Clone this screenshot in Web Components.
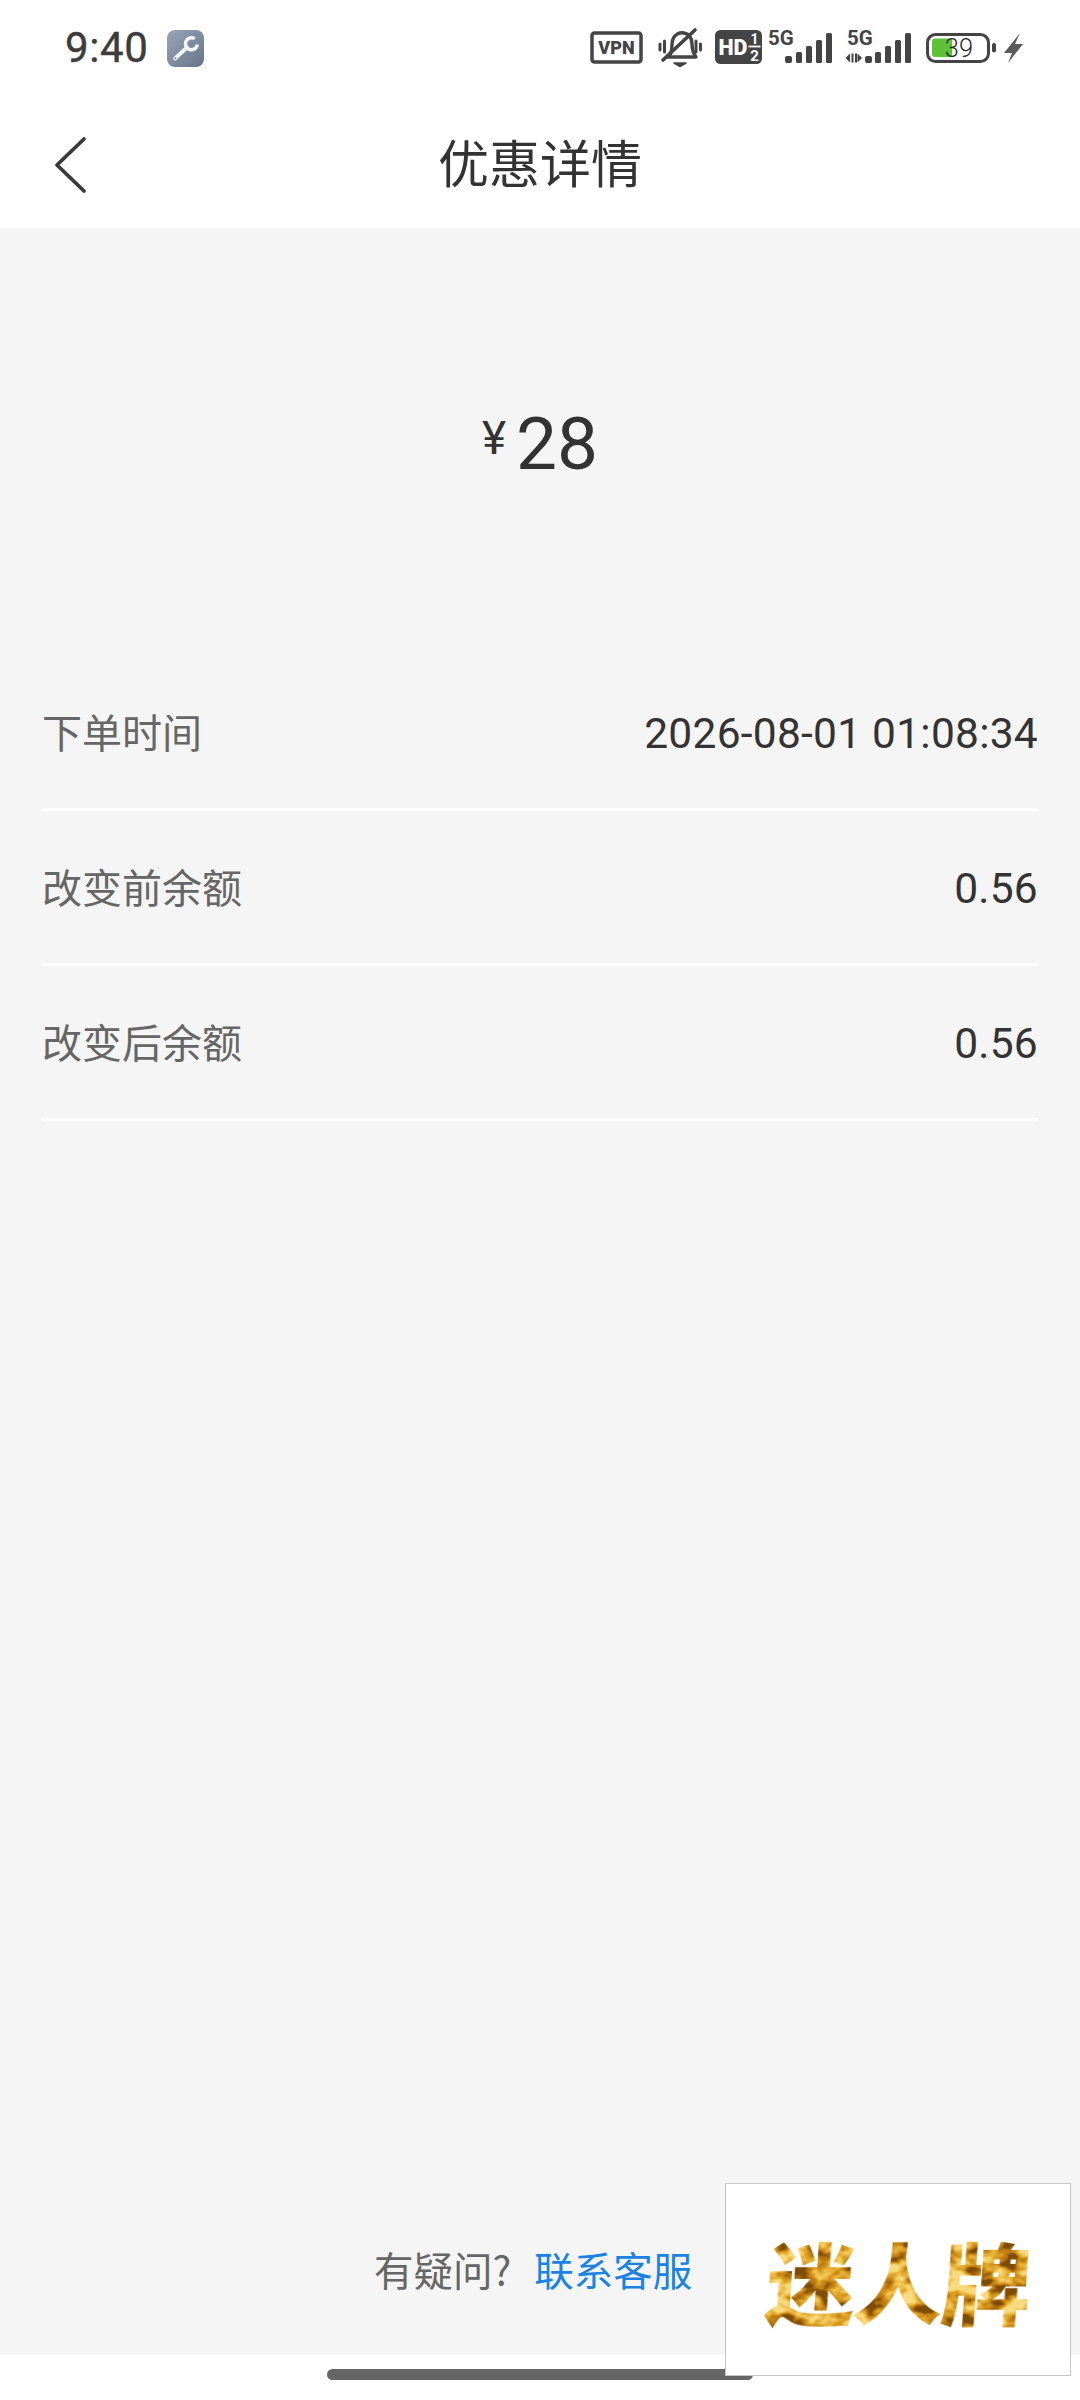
<!DOCTYPE html>
<html lang="zh">
<head>
<meta charset="utf-8">
<title>优惠详情</title>
<style>
  html, body { margin: 0; padding: 0; background: #fff; }
  body {
    width: 1080px;
    height: 2400px;
    position: relative;
    overflow: hidden;
    font-family: "Roboto", "Noto Sans CJK SC", sans-serif;
    display: flex;
    flex-direction: column;
  }
</style>
</head>
<body>
  <status-bar></status-bar>
  <nav-bar>优惠详情</nav-bar>
  <detail-page>
    <price-tag slot="price" value="28"></price-tag>
    <detail-row label="下单时间" value="2026-08-01 01:08:34"></detail-row>
    <detail-row label="改变前余额" value="0.56"></detail-row>
    <detail-row label="改变后余额" value="0.56"></detail-row>
    <help-line slot="footer"></help-line>
  </detail-page>
  <home-bar></home-bar>
  <brand-mark>迷人牌</brand-mark>

<script>
class StatusBar extends HTMLElement {
    constructor() {
        super();
        this.attachShadow({ mode: 'open' });
        this.shadowRoot.innerHTML = `
            <style>
                :host { display: flex; align-items: center; height: 96px; flex: none; box-sizing: border-box; position: relative; }
                .left { display: flex; align-items: center; margin-left: 65px; }
                .time { font: 400 42px/48px "Roboto", sans-serif; color: #3c3c3c; letter-spacing: 0.6px; -webkit-text-stroke: 0.4px #3c3c3c; }
                .tool { margin-left: 19px; display: block; }
                .right { margin-left: auto; margin-right: 54px; display: flex; align-items: center; }
                svg { display: block; }
                text { font-family: "Roboto", sans-serif; }
            </style>
            <div class="left">
                <span class="time">9:40</span>
                <svg class="tool" width="37" height="37" viewBox="0 0 37 37">
                    <defs><linearGradient id="tg" x1="0" y1="0" x2="1" y2="1"><stop offset="0" stop-color="#9aa6b6"/><stop offset="1" stop-color="#66748a"/></linearGradient></defs>
                    <rect width="37" height="37" rx="8" fill="url(#tg)"/>
                    <path d="M8 28.500 L20 17.500" stroke="#f4f6f8" stroke-width="3.800" stroke-linecap="round"/>
                    <path d="M27.800 8.800 A6 6 0 1 0 30.400 14.500" fill="none" stroke="#f4f6f8" stroke-width="3.400"/>
                    <circle cx="8.300" cy="28.300" r="1" fill="#7a8799"/>
                </svg>
            </div>
            <div class="right">
                <svg width="436" height="56" viewBox="590 20 436 56">
                    <!-- vpn -->
                    <rect x="592" y="33" width="49" height="29" rx="2.500" fill="none" stroke="#444" stroke-width="3.500"/>
                    <text x="616.500" y="54" text-anchor="middle" font-weight="900" font-size="18" fill="#444">VPN</text>
                    <!-- muted bell -->
                    <path d="M670 55 C673 50 671 43 673 39 C675 34 680 32 684 33 C689 34 692 38 692 44 C692 49 693 53 696 57 H667" fill="none" stroke="#444" stroke-width="3.400" stroke-linejoin="round"/>
                    <path d="M674 63 H686 L680 66.500 Z" fill="#444" stroke="#444" stroke-width="1.500" stroke-linejoin="round"/>
                    <path d="M663 60 L695 30" stroke="#444" stroke-width="3.600" stroke-linecap="round"/>
                    <path d="M660 44 v6 M664.500 41 v11 M696 41 v11 M700.500 44 v6" stroke="#444" stroke-width="3" stroke-linecap="round"/>
                    <!-- hd -->
                    <rect x="715" y="30" width="47" height="34" rx="5.500" fill="#444"/>
                    <text x="718.500" y="55" font-weight="900" font-size="21.500" fill="#fff">HD</text>
                    <text x="754.500" y="43.500" text-anchor="middle" font-weight="700" font-size="14" fill="#fff">1</text>
                    <path d="M748.500 46.500 H760.500" stroke="#fff" stroke-width="1.800"/>
                    <text x="754.500" y="61" text-anchor="middle" font-weight="700" font-size="15" fill="#fff">2</text>
                    <!-- sim 1 -->
                    <text x="768" y="44.500" font-weight="700" font-size="20.500" fill="#444">5G</text>
                    <g fill="#444">
                        <rect x="785" y="56" width="7" height="7" rx="2"/>
                        <rect x="796" y="52" width="6" height="11" rx="1.500"/>
                        <rect x="806" y="46" width="6" height="17" rx="1.500"/>
                        <rect x="816" y="40" width="6" height="23" rx="1.500"/>
                        <rect x="826" y="33" width="6" height="30" rx="1.500"/>
                    </g>
                    <!-- sim 2 -->
                    <text x="847" y="44.500" font-weight="700" font-size="20.500" fill="#444">5G</text>
                    <g fill="#444">
                        <path d="M850 53.500 V62.500 L845.500 58 Z"/>
                        <rect x="851.500" y="53.500" width="2" height="9"/>
                        <rect x="855" y="53.500" width="2" height="9"/>
                        <path d="M857.500 53.500 V62.500 L862 58 Z"/>
                        <rect x="865" y="56" width="7" height="7" rx="2"/>
                        <rect x="875" y="52" width="6" height="11" rx="1.500"/>
                        <rect x="885" y="46" width="6" height="17" rx="1.500"/>
                        <rect x="895" y="40" width="6" height="23" rx="1.500"/>
                        <rect x="905" y="33" width="6" height="30" rx="1.500"/>
                    </g>
                    <!-- battery -->
                    <rect x="927.500" y="34.500" width="61" height="27" rx="8" fill="none" stroke="#444" stroke-width="3"/>
                    <path d="M935 38.500 H952 V57 H935 Q932 57 932 54 V41.500 Q932 38.500 935 38.500 Z" fill="#5ec238"/>
                    <text x="959" y="56.500" text-anchor="middle" font-weight="300" font-size="25.500" fill="#2c2c2c">39</text>
                    <rect x="992" y="43" width="4" height="9.500" rx="2" fill="#444"/>
                    <!-- bolt -->
                    <path d="M1020 33 L1004 53 H1012 L1008 63 L1023 44 H1015 Z" fill="#5a5a5a"/>
                </svg>
            </div>
        `;
    }
}
customElements.define('status-bar', StatusBar);

class NavBar extends HTMLElement {
    constructor() {
        super();
        this.attachShadow({ mode: 'open' });
        this.shadowRoot.innerHTML = `
            <style>
                :host { display: grid; grid-template-columns: 1fr auto 1fr; align-items: center; height: 132px; flex: none; background: #fff; }
                .back { margin-left: 53px; display: block; margin-top: 6px; }
                .title { font: 400 51px/60px "Noto Sans CJK SC", sans-serif; color: #333; margin-top: -2px; }
            </style>
            <svg class="back" width="34" height="60" viewBox="0 0 34 60">
                <path d="M31 4 L4 30 L31 56" fill="none" stroke="#3a3a3a" stroke-width="3.800" stroke-linecap="round" stroke-linejoin="round"/>
            </svg>
            <div class="title"><slot></slot></div>
            <span></span>
        `;
    }
}
customElements.define('nav-bar', NavBar);

class DetailPage extends HTMLElement {
    constructor() {
        super();
        this.attachShadow({ mode: 'open' });
        this.shadowRoot.innerHTML = `
            <style>
                :host { display: flex; flex-direction: column; flex: 1; background: #f5f5f5; padding: 0 42px; box-sizing: border-box; }
                .price { display: block; margin-top: 183px; height: 60px; }
                .rows { display: flex; flex-direction: column; margin-top: 185px; }
                .foot { margin-top: auto; margin-bottom: 61px; }
            </style>
            <div class="price"><slot name="price"></slot></div>
            <div class="rows"><slot></slot></div>
            <div class="foot"><slot name="footer"></slot></div>
        `;
    }
}
customElements.define('detail-page', DetailPage);

class PriceTag extends HTMLElement {
    constructor() {
        super();
        this.attachShadow({ mode: 'open' });
        const v = this.getAttribute('value');
        this.shadowRoot.innerHTML = `
            <style>
                :host { display: flex; justify-content: center; align-items: flex-start; color: #333; }
                .sign { font: 400 46px/50px "Roboto", sans-serif; margin-right: 10px; margin-top: 2px; }
                .num { font: 400 73px/80px "Roboto", sans-serif; margin-top: -7px; }
            </style>
            <span class="sign">¥</span><span class="num">${v}</span>
        `;
    }
}
customElements.define('price-tag', PriceTag);

class DetailRow extends HTMLElement {
    constructor() {
        super();
        this.attachShadow({ mode: 'open' });
        this.shadowRoot.innerHTML = `
            <style>
                :host { display: flex; justify-content: space-between; align-items: center; height: 155px; box-sizing: border-box; border-bottom: 3px solid #fff; }
                .label { font: 400 40px/50px "Noto Sans CJK SC", sans-serif; color: #666; margin-top: -2px; }
                .value { font: 400 42.500px/50px "Roboto", sans-serif; letter-spacing: 0.25px; color: #333; margin-top: 4px; }
            </style>
            <span class="label">${this.getAttribute('label')}</span>
            <span class="value">${this.getAttribute('value')}</span>
        `;
    }
}
customElements.define('detail-row', DetailRow);

class HelpLine extends HTMLElement {
    constructor() {
        super();
        this.attachShadow({ mode: 'open' });
        this.shadowRoot.innerHTML = `
            <style>
                :host { display: flex; margin-left: 332px; font: 400 39.500px/50px "Noto Sans CJK SC", sans-serif; color: #666; }
                .link { color: #1a82e2; margin-left: 23px; }
            </style>
            <span>有疑问?</span><span class="link">联系客服</span>
        `;
    }
}
customElements.define('help-line', HelpLine);

class HomeBar extends HTMLElement {
    constructor() {
        super();
        this.attachShadow({ mode: 'open' });
        this.shadowRoot.innerHTML = `
            <style>
                :host { display: flex; justify-content: center; height: 45px; flex: none; background: #fff; }
                .pill { width: 426px; height: 11px; margin-top: 14px; background: #666; border-radius: 6px; }
            </style>
            <div class="pill"></div>
        `;
    }
}
customElements.define('home-bar', HomeBar);

// watermark lying over the page corner, gold comes from a noise filter on the live text
class BrandMark extends HTMLElement {
    constructor() {
        super();
        this.attachShadow({ mode: 'open' });
        this.shadowRoot.innerHTML = `
            <style>
                :host { position: absolute; left: 725px; top: 2183px; width: 346px; height: 193px; box-sizing: border-box; background: #fff; border: 1px solid #c6c6c6; display: flex; align-items: center; justify-content: center; }
                .word {
                    font: 900 88px/100px "Noto Sans CJK SC", sans-serif;
                    letter-spacing: -2px;
                    color: #c8921e;
                    filter: url(#gold);
                    transform: skewX(-4deg) scaleX(1.02);
                }
                svg { position: absolute; width: 0; height: 0; }
            </style>
            <svg aria-hidden="true">
                <filter id="gold" x="0" y="0" width="100%" height="100%" color-interpolation-filters="sRGB">
                    <feTurbulence type="fractalNoise" baseFrequency="0.04 0.06" numOctaves="3" seed="7"/>
                    <feColorMatrix values="3 0 0 0 -1  3 0 0 0 -1  3 0 0 0 -1  0 0 0 0 1"/>
                    <feComponentTransfer>
                        <feFuncR type="table" tableValues="0.50 0.72 0.85 0.93 0.98"/>
                        <feFuncG type="table" tableValues="0.30 0.47 0.60 0.74 0.86"/>
                        <feFuncB type="table" tableValues="0.02 0.06 0.12 0.28 0.50"/>
                    </feComponentTransfer>
                    <feComposite in2="SourceAlpha" operator="in"/>
                </filter>
            </svg>
            <span class="word"><slot></slot></span>
        `;
    }
}
customElements.define('brand-mark', BrandMark);
</script>
</body>
</html>
